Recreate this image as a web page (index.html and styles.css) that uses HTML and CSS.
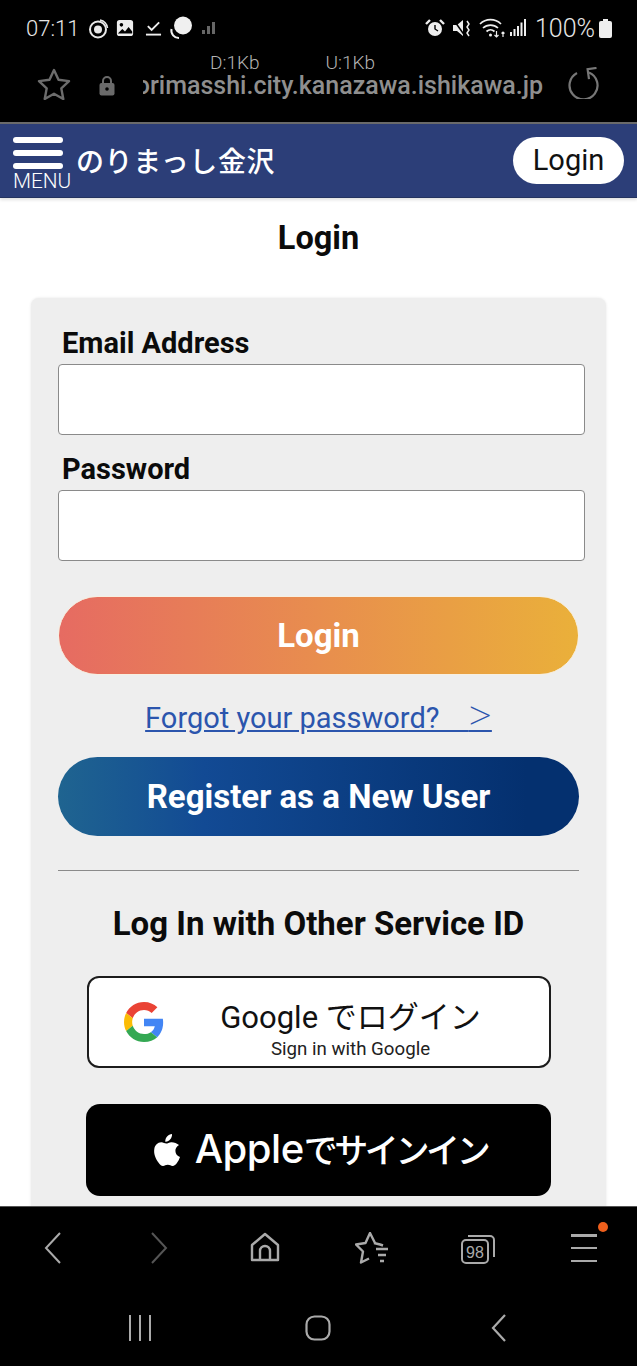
FILE: index.html
```html
<!DOCTYPE html>
<html lang="ja">
<head>
<meta charset="utf-8">
<title>Login</title>
<link rel="stylesheet" href="styles.css">
</head>
<body>
<div class="phone">
  <div class="chrome">
    <div class="status">
      <div class="status-group">
        <span class="time">07:11</span>
        <svg class="si i-ring" width="22" height="23" viewBox="0 0 22 22" fill="none" stroke="#e8e8e8"><circle cx="11" cy="12" r="8" stroke-width="2"/><circle cx="11" cy="12" r="4" fill="#e8e8e8" stroke="none"/><path d="M13 2.500a9.500 9.500 0 0 1 7.500 8" stroke-width="1.500"/></svg>
        <svg class="si i-image" width="18" height="18" viewBox="0 0 20 20"><rect x="1" y="1" width="18" height="18" rx="3" fill="#eee"/><circle cx="6" cy="6.500" r="2" fill="#000"/><path d="M2 16l5-5 3 3 4-5 4 5v2H2z" fill="#000"/></svg>
        <svg class="si i-check" width="17" height="20" viewBox="0 0 18 20" fill="none" stroke="#eee" stroke-width="2"><path d="M3 8l4 4 8-8"/><path d="M1 17h16"/></svg>
        <svg class="si i-bubble" width="24" height="24" viewBox="0 0 24 24"><circle cx="14" cy="9.500" r="9" fill="#f0f0f0"/><path d="M2.500 13a7.500 7.500 0 0 0 7.500 9" fill="none" stroke="#f0f0f0" stroke-width="2"/></svg>
        <svg class="si i-signal" width="14" height="12" viewBox="0 0 14 12" fill="#666"><rect x="0" y="8" width="3" height="4"/><rect x="5" y="4" width="3" height="8"/><rect x="10" y="0" width="3" height="12"/></svg>
      </div>
      <div class="status-group right">
        <svg width="20" height="20" viewBox="0 0 20 20"><circle cx="10" cy="11" r="7" fill="#eee"/><path d="M1 6l4-4M19 6l-4-4" stroke="#eee" stroke-width="2.400"/><path d="M10 7v4l3 2" stroke="#000" stroke-width="1.400" fill="none"/></svg>
        <svg width="20" height="20" viewBox="0 0 20 20"><path d="M1 7h4l6-5v16l-6-5H1z" fill="#eee"/><path d="M1 1l12 17" stroke="#000" stroke-width="1.500"/><path d="M15 3l2 3-2 3 2 3-2 3 2 3" stroke="#eee" stroke-width="1.500" fill="none"/></svg>
        <svg class="i-wifi" width="27" height="22" viewBox="0 0 27 22" fill="none" stroke="#eee" stroke-width="1.700"><path d="M1 7a15 15 0 0 1 21 0M4 11a11 11 0 0 1 15 0M7.500 14.500a6 6 0 0 1 8 0"/><circle cx="11.500" cy="18" r="1.500" fill="#eee" stroke="none"/><path d="M17.500 14v6M15.500 18l2 2 2-2M24 20v-5M22.500 16.500l1.500-1.500 1.500 1.500" stroke-width="1.200"/></svg>
        <svg width="17" height="18" viewBox="0 0 17 18" fill="#eee"><rect x="0" y="13" width="2" height="4"/><rect x="3.500" y="10" width="2" height="7"/><rect x="7" y="7" width="2" height="10"/><rect x="10.500" y="3.500" width="2" height="13.500"/><rect x="14" y="0" width="2" height="17"/></svg>
        <span class="battery-text">100%</span>
        <svg width="13" height="19" viewBox="0 0 13 19" fill="#eee"><rect x="4" y="0" width="5" height="3"/><rect x="0" y="2" width="13" height="17" rx="2"/></svg>
      </div>
    </div>
    <div class="speeds"><span>D:1Kb</span><span>U:1Kb</span></div>
    <div class="urlbar">
      <svg class="star" width="34" height="32" viewBox="0 0 34 32" fill="none" stroke="#6c6c6c" stroke-width="2.400" stroke-linejoin="round"><path d="M17 2l4.500 9.800 10.500 1.300-7.700 7.300 2 10.600L17 25.800 7.700 31l2-10.600L2 13.100l10.500-1.300z"/></svg>
      <svg class="lock" width="16" height="21" viewBox="0 0 16 21"><path d="M4 9V6a4 4 0 0 1 8 0v3" fill="none" stroke="#6a6a6a" stroke-width="2"/><rect x="0.500" y="8" width="15" height="12.500" rx="2" fill="#6a6a6a"/><circle cx="8" cy="14" r="1.800" fill="#000"/></svg>
      <div class="url"><span>norimasshi.city.kanazawa.ishikawa.jp</span></div>
      <svg class="reload" width="32" height="32" viewBox="0 0 32 32" fill="none" stroke="#777" stroke-width="2.200"><path d="M10 6a14 14 0 1 0 12-.5"/><path d="M22 14V4h9" transform="rotate(-8 22 5) translate(-1 -2)"/></svg>
    </div>
  </div>

  <header class="site-header">
    <div class="menu">
      <div class="burger"><i></i><i></i><i></i></div>
      <span class="menu-label">MENU</span>
    </div>
    <div class="site-name">のりまっし金沢</div>
    <a class="header-login">Login</a>
  </header>

  <main class="content">
    <h1 class="title">Login</h1>
    <section class="card">
      <label class="field-label">Email Address</label>
      <div class="input"></div>
      <label class="field-label second">Password</label>
      <div class="input"></div>
      <button class="btn btn-login">Login</button>
      <a class="forgot">Forgot your password?&nbsp;&nbsp;&nbsp;&nbsp;<span class="forgot-arrow">&gt;</span></a>
      <button class="btn btn-register">Register as a New User</button>
      <div class="rule"></div>
      <h2 class="other">Log In with Other Service ID</h2>
      <div class="sso sso-google">
        <svg class="g-logo" width="40" height="40" viewBox="0 0 48 48"><path fill="#EA4335" d="M24 9.500c3.540 0 6.710 1.220 9.210 3.600l6.850-6.850C35.900 2.380 30.470 0 24 0 14.620 0 6.510 5.380 2.560 13.220l7.980 6.190C12.430 13.720 17.740 9.500 24 9.500z"/><path fill="#4285F4" d="M46.980 24.550c0-1.570-.15-3.090-.38-4.550H24v9.020h12.940c-.58 2.960-2.260 5.480-4.780 7.180l7.730 6c4.510-4.180 7.090-10.360 7.090-17.650z"/><path fill="#FBBC05" d="M10.530 28.590c-.48-1.450-.76-2.990-.76-4.590s.27-3.140.76-4.590l-7.980-6.190C.92 16.460 0 20.120 0 24c0 3.880.92 7.540 2.560 10.780l7.970-6.190z"/><path fill="#34A853" d="M24 48c6.480 0 11.930-2.130 15.890-5.810l-7.730-6c-2.150 1.450-4.920 2.300-8.160 2.300-6.260 0-11.570-4.220-13.470-9.910l-7.980 6.190C6.510 42.620 14.620 48 24 48z"/></svg>
        <div class="g-text">
          <span class="g-main">Google でログイン</span>
          <span class="g-sub">Sign in with Google</span>
        </div>
      </div>
      <div class="sso sso-apple">
        <svg width="28" height="32" viewBox="0 0 28 32" fill="#fff"><path d="M20 0c.2 2-.5 3.900-1.700 5.300-1.200 1.500-3.100 2.600-5 2.400-.2-1.900.7-3.900 1.800-5.200C16.300 1.100 18.300.1 20 0z"/><path d="M27 11c-2.500 1.600-3.700 3.500-3.600 6 .1 2.900 1.800 5 4.600 6-.7 2.200-1.800 4.200-3.100 6-1.200 1.600-2.500 3-4.300 3-1.900 0-2.500-1.200-4.800-1.200-2.300 0-3 1.200-4.800 1.200-1.800 0-3.200-1.600-4.400-3.300C3.700 25.200 1.500 19.800 2.300 15c.6-3.700 3.300-6.700 7-6.700 2 0 3.500 1.300 4.900 1.300 1.300 0 3-1.500 5.400-1.400 2.600.1 5.400 1.100 7.400 2.800z"/></svg>
        <span class="apple-text">Apple<span class="apple-kana">でサインイン</span></span>
      </div>
    </section>
  </main>

  <footer class="bottom">
    <div class="browser-nav">
      <svg width="20" height="32" viewBox="0 0 20 32" fill="none" stroke="#aaa" stroke-width="2"><path d="M17 1L3 16l14 15"/></svg>
      <svg width="20" height="32" viewBox="0 0 20 32" fill="none" stroke="#555" stroke-width="2"><path d="M3 1l14 15L3 31"/></svg>
      <svg width="30" height="30" viewBox="0 0 30 30" fill="none" stroke="#aaa" stroke-width="2.400"><path d="M2 28V13L15 2l13 11v15z" stroke-linejoin="round"/><path d="M10 28v-9a5 5 0 0 1 10 0v9"/></svg>
      <svg width="34" height="32" viewBox="0 0 34 32" fill="none" stroke="#aaa" stroke-width="2.400" stroke-linejoin="round"><path d="M20 11L15 1l-4.500 10L1 12.500l7 7-2 11 8-4"/><path d="M19 11l6 1.500 3 1M21 17h12M23 23h8M25 29h4"/></svg>
      <svg class="tabs" width="34" height="32" viewBox="0 0 34 32"><rect x="1" y="8" width="26" height="23" rx="4" fill="none" stroke="#aaa" stroke-width="2"/><path d="M7 4h22a4 4 0 0 1 4 4v17" fill="none" stroke="#aaa" stroke-width="2"/><text x="14" y="25.500" text-anchor="middle" class="tabs-count">98</text></svg>
      <div class="more"><i></i><i></i><i></i><b></b></div>
    </div>
    <div class="system-nav">
      <svg width="24" height="26" viewBox="0 0 24 26" stroke="#aaa" stroke-width="2"><path d="M2 0v26M12 0v26M22 0v26"/></svg>
      <svg class="sys-home" width="26" height="26" viewBox="0 0 26 26" fill="none" stroke="#aaa" stroke-width="2.200"><rect x="1.500" y="1.500" width="23" height="23" rx="8"/></svg>
      <svg width="16" height="28" viewBox="0 0 16 28" fill="none" stroke="#aaa" stroke-width="2.200"><path d="M14 1L2 14l12 13"/></svg>
    </div>
  </footer>
</div>
</body>
</html>
```
FILE: styles.css
```css
* { box-sizing: border-box; }
html, body { margin: 0; padding: 0; }
body { font-family: Roboto, "Noto Sans CJK JP", sans-serif; background: #000; }
.phone { width: 637px; height: 1366px; display: flex; flex-direction: column; overflow: hidden; }

.chrome { height: 122px; background: #000; flex: none; display: flex; flex-direction: column; }
.status { height: 54px; padding: 15px 26px 0 26px; display: flex; justify-content: space-between; align-items: flex-start; }
.status-group { display: flex; align-items: center; height: 26px; }
.status-group .si { flex: none; }
.i-ring { margin-left: 8px; }
.i-image { margin-left: 7px; }
.i-check { margin-left: 11px; }
.i-bubble { margin-left: 7px; }
.i-signal { margin-left: 9px; }
.status-group.right { gap: 7px; margin-right: -1px; }
.i-wifi { margin-right: -3px; }
.time { font-size: 22px; color: #e6e6e6; font-weight: 300; }
.battery-text { font-size: 25px; color: #e6e6e6; margin-left: 1px; margin-right: -3px; font-weight: 300; }
.speeds { height: 17px; padding-left: 210px; display: flex; gap: 66px; font-size: 19px; line-height: 17px; color: #b4b4b4; font-weight: 300; }
.urlbar { display: flex; align-items: center; height: 30px; padding-left: 37px; }
.star { flex: none; margin-bottom: 4px; }
.lock { flex: none; margin-left: 28px; margin-bottom: 2px; }
.url { width: 400px; margin-left: 28px; overflow: hidden; flex: none; direction: rtl; font-size: 25px; line-height: 30px; color: #8f8f8f; white-space: nowrap; font-family: Roboto, sans-serif; font-weight: 500; }
.url span { unicode-bidi: plaintext; }
.reload { flex: none; margin-left: 24px; margin-bottom: 6px; }

.site-header { flex: none; height: 76px; background: #2c3e78; border-top: 2px solid #6a6a6a; border-bottom: 1px solid #24335f; display: flex; align-items: center; padding: 0 13px 0 13px; box-shadow: 0 2px 3px rgba(0,0,0,.12); position: relative; z-index: 2; }
.menu { width: 59px; flex: none; display: flex; flex-direction: column; align-self: flex-start; padding-top: 13px; }
.burger { width: 50px; display: flex; flex-direction: column; gap: 7px; }
.burger i { display: block; height: 6px; background: #fff; border-radius: 3px; }
.menu-label { color: #fff; font-size: 20.800px; line-height: 20px; margin-top: 2px; font-weight: 300; }
.site-name { color: #fff; font-size: 28px; margin-left: 4px; margin-bottom: 2px; font-family: "Noto Sans CJK JP", sans-serif; font-weight: 500; letter-spacing: .6px; flex: 1; line-height: 1; }
.header-login { background: #fff; color: #111; font-size: 29px; width: 111px; height: 47px; border-radius: 24px; display: flex; align-items: center; justify-content: center; margin-top: -1px; }

.content { flex: 1; background: #fff; overflow: hidden; min-height: 0; }
.title { margin: 21px 0 41px; text-align: center; font-size: 32.500px; line-height: 38px; font-weight: 700; color: #0b0b0b; }
.card { margin: 0 31px; background: #eee; border-radius: 8px 8px 0 0; box-shadow: 0 0 3px rgba(0,0,0,.1); padding: 27px 21px 40px 27px; }
.field-label { display: block; font-size: 29px; line-height: 36px; font-weight: 700; color: #0b0b0b; margin-left: 4px; margin-bottom: 3px; }
.field-label.second { margin-top: 16px; margin-bottom: 3px; }
.input { height: 71px; background: #fff; border: 1px solid #8a8a8a; border-radius: 4px; }
.btn { display: block; width: 100%; height: 79px; border-radius: 40px; border: 0; color: #fff; font-family: Roboto, sans-serif; font-weight: 700; font-size: 33px; }
.btn-login { margin: 35px 0 0; width: 521px; border: 1px solid #f7efe0; background: linear-gradient(90deg, #e66b62, #eab03a); }
.forgot { display: block; width: 521px; text-align: center; margin-top: 25px; font-size: 29px; line-height: 36px; color: #2b55ad; text-decoration: underline; text-underline-offset: 2px; font-weight: 400; }
.forgot-arrow { font-size: 46px; line-height: 0; font-weight: 100; vertical-align: -3px; }
.btn-register { margin-top: 21px; width: 521px; background: linear-gradient(90deg, #1f6490, #124a94 28%, #04306f 90%); }
.rule { width: 521px; height: 1px; background: #8a8a8a; margin-top: 34px; }
.other { width: 521px; margin: 34px 0 0; text-align: center; font-size: 33px; line-height: 38px; font-weight: 700; color: #0b0b0b; }
.sso { width: 465px; height: 92px; display: flex; align-items: center; }
.sso-google { margin: 33px 0 0 29px; width: 464px; background: #fff; border: 2px solid #1c1c1c; border-radius: 12px; padding-left: 35px; }
.g-logo { flex: none; }
.g-text { flex: 1; display: flex; flex-direction: column; align-items: center; margin-top: 15px; padding-right: 12px; }
.g-main { font-size: 31px; line-height: 38px; color: #111; white-space: nowrap; }
.g-sub { font-size: 18.700px; line-height: 24px; color: #222; }
.sso-apple { margin: 36px 0 0 28px; background: #000; border-radius: 14px; justify-content: center; gap: 15px; padding-left: 2px; }
.apple-text { color: #fff; font-size: 40px; line-height: 46px; font-weight: 500; font-family: Inter, "Noto Sans CJK JP", sans-serif; letter-spacing: -.5px; margin-top: -2px; }
.apple-kana { font-size: 34px; letter-spacing: -3.400px; font-weight: 500; font-family: "Noto Sans CJK JP", sans-serif; }

.bottom { flex: none; height: 160px; background: #000; border-top: 1px solid #555; position: relative; z-index: 3; }
.browser-nav { height: 83px; display: grid; grid-template-columns: repeat(6, 1fr); justify-items: center; align-items: start; padding-top: 25px; }
.tabs-count { font-size: 16px; font-family: "Liberation Sans", sans-serif; fill: #aaa; }
.more { width: 26px; height: 28px; margin-top: 2px; position: relative; display: flex; flex-direction: column; justify-content: space-between; }
.more i { display: block; height: 2.500px; background: #aaa; }
.more b { position: absolute; top: -12px; right: -11px; width: 10px; height: 10px; border-radius: 50%; background: #ee5f1c; }
.system-nav { display: flex; justify-content: space-between; align-items: center; padding: 24px 130px 0 128px; }
.sys-home { margin-right: 8px; }
```
